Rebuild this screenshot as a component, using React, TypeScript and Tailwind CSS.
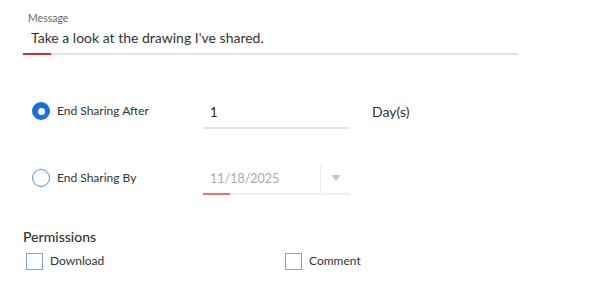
import React from "react";

function Radio({ checked }: { checked: boolean }) {
  return checked ? (
    <span className="flex h-[18px] w-[18px] items-center justify-center rounded-full bg-[#1a6fe0]">
      <span className="h-[7px] w-[7px] rounded-full bg-white" />
    </span>
  ) : (
    <span className="h-[18px] w-[18px] rounded-full border-[1.5px] border-[#5b8fe0] bg-white" />
  );
}

function Checkbox() {
  return <span className="h-[17px] w-[17px] border-[1.5px] border-[#7aa2e3] bg-white" />;
}

export default function App() {
  return (
    <div
      className="h-[286px] w-[600px] bg-white pl-[23px] pt-[11px] text-[#333]"
      style={{ fontFamily: "Lato, 'Noto Sans', sans-serif" }}
    >
      {/* message */}
      <div className="w-[495px]">
        <div className="pl-[5px] text-[10.5px] leading-[14px] text-[#666]">Message</div>
        <div className="pl-[8px] pt-[3px] text-[14px] leading-[20px] text-[#333]">
          Take a look at the drawing I've shared.
        </div>
        <div className="mt-[5px] flex h-[2px] bg-[#e2e2e2]">
          <span className="h-[2px] w-[28px] bg-[#d32f2f]" />
        </div>
      </div>

      {/* end sharing after */}
      <div className="mt-[38px] flex items-start">
        <div className="flex w-[180px] items-center gap-[7px] pl-[9px] pt-[9px]">
          <Radio checked />
          <span className="text-[12px]">End Sharing After</span>
        </div>
        <div className="w-[147px]">
          <div className="h-[34px] pl-[7px] pt-[10px] text-[13px] leading-[18px] text-[#222]">1</div>
          <div className="h-[2px] bg-[#e6e6e6]" />
        </div>
        <div className="pl-[22px] pt-[10px] text-[14px] leading-[18px]">Day(s)</div>
      </div>

      {/* end sharing by */}
      <div className="mt-[32px] flex items-start">
        <div className="flex w-[180px] items-center gap-[7px] pl-[9px] pt-[8px]">
          <Radio checked={false} />
          <span className="text-[12px]">End Sharing By</span>
        </div>
        <div className="w-[147px]">
          <div className="flex h-[32px]">
            <div className="w-[117px] pl-[7px] pt-[9px] text-[12.5px] leading-[18px] text-[#aaa]">11/18/2025</div>
            <div className="mt-[4px] w-px bg-[#ececec]" />
            <div className="flex flex-1 items-center justify-center pt-[2px]">
              <span className="h-0 w-0 border-x-[5px] border-t-[6px] border-x-transparent border-t-[#c8c8c8]" />
            </div>
          </div>
          <div className="flex h-[2px] bg-[#eeeeee]">
            <span className="h-[2px] w-[27px] bg-[#e57373]" />
          </div>
        </div>
      </div>

      {/* permissions */}
      <div className="mt-[33px] text-[14px] font-medium leading-[18px] text-[#333]">Permissions</div>
      <div className="mt-[6px] flex items-center">
        <div className="flex w-[262px] items-center gap-[7px] pl-[3px]">
          <Checkbox />
          <span className="text-[12px]">Download</span>
        </div>
        <div className="flex items-center gap-[7px]">
          <Checkbox />
          <span className="text-[12px]">Comment</span>
        </div>
      </div>
    </div>
  );
}
